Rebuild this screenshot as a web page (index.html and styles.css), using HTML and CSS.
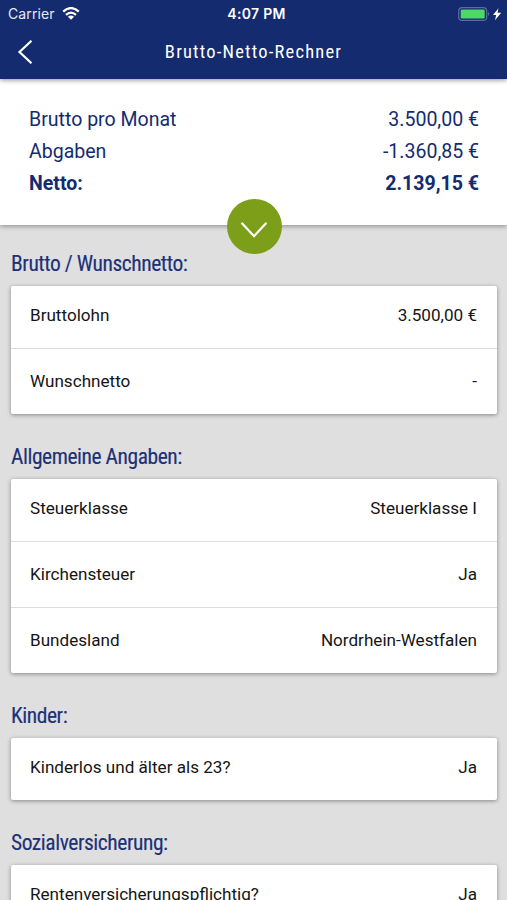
FILE: index.html
```
<!DOCTYPE html>
<html lang="de">
<head>
<meta charset="utf-8">
<title>Brutto-Netto-Rechner</title>
<link rel="stylesheet" href="styles.css">
</head>
<body>
<div class="app">
  <header class="top">
    <div class="status">
      <div class="carrier"><span>Carrier</span>
        <svg class="wifi" viewBox="0 0 18 13" width="18" height="13"><path d="M1.200 4.600Q9-2.400 16.800 4.600M4 7.800Q9 3.400 14 7.800" fill="none" stroke="#fff" stroke-width="2.300"/><path d="M9 12.800L5.900 9.700Q9 7.200 12.100 9.700Z" fill="#fff"/></svg>
      </div>
      <div class="clock">4:07 PM</div>
      <div class="power">
        <svg viewBox="0 0 44 14" width="44" height="14"><rect x=".7" y=".6" width="28" height="12.800" rx="3.500" fill="none" stroke="#5d6c9c" stroke-width="1.200"/><rect x="2.700" y="2.500" width="24" height="9" rx="1.200" fill="#4cd964"/><path d="M30 4.800q2.200 2.200 0 4.400z" fill="#5d6c9c"/><path d="M40.500 1.200L35 8h3.200L37 13.200l6.200-7.500h-3.700z" fill="#fff"/></svg>
      </div>
    </div>
    <div class="nav">
      <svg class="back" viewBox="0 0 16 24" width="16" height="24"><path d="M14.500 .8L2.500 12l12 11.200" fill="none" stroke="#fff" stroke-width="2.200"/></svg>
      <h1>Brutto-Netto-Rechner</h1>
    </div>
  </header>
  <section class="summary">
    <div class="sum"><span>Brutto pro Monat</span><span>3.500,00 €</span></div>
    <div class="sum"><span>Abgaben</span><span>-1.360,85 €</span></div>
    <div class="sum total"><span>Netto:</span><span>2.139,15 €</span></div>
    <div class="expand"><svg viewBox="0 0 28 16" width="28" height="16"><path d="M1.500 .8L14 14.200 26.500 .8" fill="none" stroke="#fff" stroke-width="2.200"/></svg></div>
  </section>
  <main>
    <h2>Brutto / Wunschnetto:</h2>
    <div class="card">
      <div class="row"><span>Bruttolohn</span><span>3.500,00 €</span></div>
      <div class="row"><span>Wunschnetto</span><span>-</span></div>
    </div>
    <h2>Allgemeine Angaben:</h2>
    <div class="card">
      <div class="row"><span>Steuerklasse</span><span>Steuerklasse I</span></div>
      <div class="row"><span>Kirchensteuer</span><span>Ja</span></div>
      <div class="row"><span>Bundesland</span><span>Nordrhein-Westfalen</span></div>
    </div>
    <h2>Kinder:</h2>
    <div class="card">
      <div class="row"><span>Kinderlos und älter als 23?</span><span>Ja</span></div>
    </div>
    <h2>Sozialversicherung:</h2>
    <div class="card">
      <div class="row"><span>Rentenversicherungspflichtig?</span><span>Ja</span></div>
    </div>
  </main>
</div>
</body>
</html>
```
FILE: styles.css
```
* { box-sizing: border-box; }
body { margin: 0; }
.app { height: 900px; overflow: hidden; background: #dfdfdf; color: #151515; font-family: Roboto, sans-serif; }
.top { height: 79px; background: #142b70; color: #fff; position: relative; z-index: 2; box-shadow: 0 1px 5px rgba(0,0,0,.45); }
.status { height: 27px; display: grid; grid-template-columns: 1fr auto 1fr; align-items: center; padding: 0 5px 0 8px; font: 14px/27px Inter, sans-serif; }
.carrier { display: flex; align-items: center; gap: 7px; color: #e4e8f4; letter-spacing: .1px; }
.clock { font-weight: 600; letter-spacing: .3px; padding-left: 3px; }
.power { display: flex; justify-content: flex-end; }
.nav { height: 49px; display: grid; grid-template-columns: 40px 1fr 40px; align-items: center; }
.back { margin-left: 17px; }
h1 { margin: 0; text-align: center; font: 400 18.5px/24px "Roboto Condensed", Roboto, sans-serif; font-stretch: 75%; letter-spacing: 1.2px; }
.summary { position: relative; height: 146px; padding: 25px 28px 0 29px; background: #fff; color: #142b70; box-shadow: 0 1px 5px rgba(0,0,0,.4); }
.sum { display: flex; justify-content: space-between; font-size: 19.55px; line-height: 32px; }
.total { font-weight: 700; line-height: 31px; }
.expand { position: absolute; left: 226.5px; top: 119.5px; width: 55px; height: 55px; border-radius: 50%; background: #7d9e18; display: flex; align-items: center; justify-content: center; padding-top: 7px; }
main { padding: 0 10px 0 11px; }
h2 { margin: 0; padding-top: 25px; height: 61px; color: #1c3178; font: 400 21.5px/28px "Roboto Condensed", Roboto, sans-serif; font-stretch: 75%; letter-spacing: -.45px; -webkit-text-stroke: .15px currentColor; }
.card { background: #fff; border-radius: 2px; box-shadow: 0 1px 4px rgba(0,0,0,.4); margin-bottom: 4px; }
.row { height: 62px; display: flex; justify-content: space-between; align-items: center; padding: 0 20px 4px 19px; font-size: 17.1px; }
.row + .row { height: 66px; border-top: 1px solid #ddd; padding-bottom: 2px; }
```
